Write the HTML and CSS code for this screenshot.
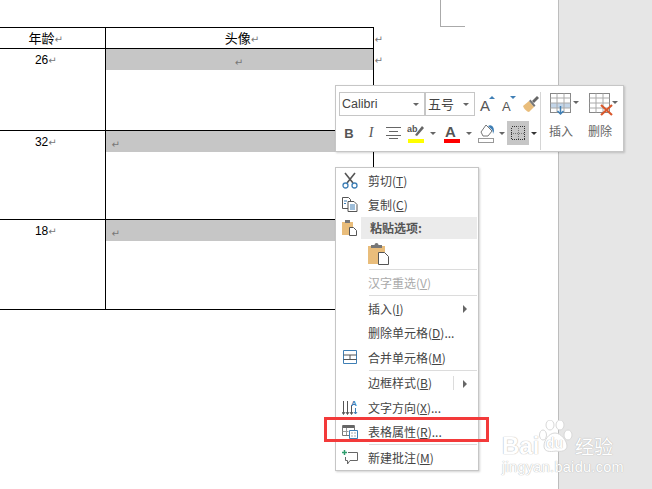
FILE: index.html
```html
<!DOCTYPE html>
<html lang="zh">
<head>
<meta charset="utf-8">
<title>表格属性</title>
<link rel="stylesheet" href="styles.css">
</head>
<body>
<div class="screen">
  <main class="page">
    <div class="corner"></div>
    <div class="table-row-wrap">
      <table class="doc-table">
        <colgroup><col class="c-age"><col class="c-photo"></colgroup>
        <tr class="r-head"><td class="age"><span class="cjk">年龄</span><span class="mark">↵</span></td><td class="photo-head"><span class="cjk">头像</span><span class="mark">↵</span></td></tr>
        <tr class="r1"><td class="age">26<span class="mark">↵</span></td><td class="photo"><div class="shade center"><span class="mark">↵</span></div></td></tr>
        <tr class="r2"><td class="age">32<span class="mark">↵</span></td><td class="photo"><div class="shade"><span class="mark">↵</span></div></td></tr>
        <tr class="r3"><td class="age">18<span class="mark">↵</span></td><td class="photo"><div class="shade"><span class="mark">↵</span></div></td></tr>
      </table>
      <div class="end-marks"><span class="mark">↵</span><span class="mark">↵</span></div>
    </div>
  </main>
  <aside class="desk"></aside>

  <div class="toolbar">
    <div class="tb-left">
      <div class="tb-row tb-row1">
        <div class="combo c-font"><span class="combo-text latin">Calibri</span><i class="caret"></i></div>
        <div class="combo c-size"><span class="combo-text">五号</span><i class="caret"></i></div>
        <svg class="ic-grow" width="20" height="20" viewBox="0 0 20 20"><text x="2" y="17" class="svg-a">A</text><path d="M11 5l3-3 3 3z" fill="#3f7fb5"/></svg>
        <svg class="ic-shrink" width="18" height="20" viewBox="0 0 18 20"><text x="2" y="17" class="svg-a2">A</text><path d="M10 2h6l-3 3z" fill="#3f7fb5"/></svg>
        <svg class="ic-brush" width="18" height="18" viewBox="0 0 18 18"><path d="M1 11l6-5 5 6-5 5c-2-.2-5-3-6-6z" fill="#e9bd7b"/><path d="M7 6l5 6 1.500-1.500-5-6z" fill="#777"/><path d="M10 6l5-5 2 2-5 5z" fill="#666"/></svg>
      </div>
      <div class="tb-row tb-row2">
        <span class="fmt fmt-b">B</span>
        <span class="fmt fmt-i">I</span>
        <svg class="ic-align" width="16" height="12" viewBox="0 0 16 12"><path d="M0 .5h15M3 4.500h9M0 8.500h15M3 11.500h9" stroke="#666" fill="none"/></svg>
        <svg class="ic-hl" width="18" height="21" viewBox="0 0 18 21"><text x="0" y="9" class="svg-ab">ab</text><path d="M8 12L15 3l2 2-7 8z" fill="#666"/><rect x="1" y="16" width="16" height="4" fill="#ff0"/></svg>
        <i class="caret c-hl"></i>
        <svg class="ic-color" width="16" height="21" viewBox="0 0 16 21"><text x="1" y="14" class="svg-color">A</text><rect y="16" width="16" height="4" fill="#f00"/></svg>
        <i class="caret c-color"></i>
        <svg class="ic-fill" width="18" height="21" viewBox="0 0 18 21"><path d="M3 9l5-7 6 6-4 5H5z" fill="#fff" stroke="#777"/><path d="M10 3c3-2 6 0 6 5l-1 3c0-3-1-5-3-6z" fill="#3f7fb5"/><rect x=".5" y="15.500" width="15" height="4" fill="#fff" stroke="#999"/></svg>
        <i class="caret c-fill"></i>
        <div class="border-btn"><svg class="crisp" width="14" height="14" viewBox="0 0 14 14"><path d="M.5.500h13v13H.5z" fill="none" stroke="#333" stroke-dasharray="1 1"/><path d="M7.500 0v14M0 7.500h14" fill="none" stroke="#777" stroke-dasharray="1 1"/></svg></div>
        <i class="caret c-border"></i>
      </div>
    </div>
    <div class="tb-div"></div>
    <div class="tb-right">
      <div class="tb-col tb-ins">
        <div class="tb-col-top">
          <svg width="25" height="23" viewBox="0 0 25 23"><rect x=".5" y=".5" width="20" height="19" fill="#fff" stroke="#888"/><rect x="1" y="10" width="19" height="5" fill="#c3d5e8"/><path d="M7 .5v19M14 .5v19M.5 5h20M.5 10h20M.5 15h20" stroke="#aaa" fill="none"/><path d="M10.500 13v7M7.500 18l3 3 3-3" stroke="#3f7fb5" stroke-width="1.500" fill="none"/></svg>
          <i class="caret"></i>
        </div>
        <span class="tb-label">插入</span>
      </div>
      <div class="tb-col tb-del">
        <div class="tb-col-top">
          <svg width="25" height="23" viewBox="0 0 25 23"><rect x=".5" y=".5" width="20" height="19" fill="#fff" stroke="#888"/><path d="M7 .5v19M14 .5v19M.5 5h20M.5 10h20M.5 15h20" stroke="#aaa" fill="none"/><path d="M12 12l11 10M23 12L12 22" stroke="#d9582c" stroke-width="2.200" fill="none"/></svg>
          <i class="caret"></i>
        </div>
        <span class="tb-label">删除</span>
      </div>
    </div>
  </div>

  <nav class="menu">
    <div class="item">
      <span class="ic"><svg width="16" height="17" viewBox="0 0 16 17"><path d="M3 1l8 10M13 1L5 11" stroke="#555" stroke-width="1.600" fill="none"/><circle cx="3.500" cy="13.500" r="2.500" fill="none" stroke="#3f7fb5" stroke-width="1.300"/><circle cx="12.500" cy="13.500" r="2.500" fill="none" stroke="#3f7fb5" stroke-width="1.300"/></svg></span>
      <span class="lb">剪切(<u>T</u>)</span>
    </div>
    <div class="item">
      <span class="ic"><svg width="16" height="15" viewBox="0 0 16 15"><path d="M.5.500h6l2 2v9H.5z" fill="#fff" stroke="#555"/><path d="M6 4.500h6l3 3v7H6z" fill="#fff" stroke="#555"/><path d="M2 4h3M2 6.500h2M8 8h5M8 10h5M8 12h5" stroke="#3f7fb5" fill="none"/></svg></span>
      <span class="lb">复制(<u>C</u>)</span>
    </div>
    <div class="item paste-head">
      <span class="ic"><svg width="16" height="16" viewBox="0 0 16 16"><rect y="2" width="11" height="13" fill="#e9bd7b"/><rect x="3" y="0" width="5" height="3" fill="#777"/><path d="M7.500 7.500h4l3 3v5h-7z" fill="#fff" stroke="#555"/></svg></span>
      <span class="lb bold">粘贴选项:</span>
    </div>
    <div class="paste-opt">
      <svg width="22" height="23" viewBox="0 0 22 23"><rect y="3" width="17" height="18" fill="#e9bd7b"/><rect x="3" y="2" width="11" height="3" fill="#777"/><circle cx="8.500" cy="2" r="2" fill="#777"/><path d="M10.500 9.500h6l4 4v8h-10z" fill="#fff" stroke="#555"/></svg>
    </div>
    <div class="sep"></div>
    <div class="item i-dis"><span class="ic"></span><span class="lb dis">汉字重选(<u>V</u>)</span></div>
    <div class="sep"></div>
    <div class="item"><span class="ic"></span><span class="lb">插入(<u>I</u>)</span><i class="arrow"></i></div>
    <div class="item"><span class="ic"></span><span class="lb">删除单元格(<u>D</u>)...</span></div>
    <div class="item">
      <span class="ic"><svg width="14" height="14" viewBox="0 0 14 14"><path d="M.5.500h13v13H.5z" fill="none" stroke="#3f7fb5"/><path d="M.5 5h13M.5 9.500h13M7 5v4.500" stroke="#555" fill="none"/></svg></span>
      <span class="lb">合并单元格(<u>M</u>)</span>
    </div>
    <div class="sep"></div>
    <div class="item"><span class="ic"></span><span class="lb">边框样式(<u>B</u>)</span><i class="vbar"></i><i class="arrow"></i></div>
    <div class="item">
      <span class="ic"><svg width="17" height="17" viewBox="0 0 17 17"><path d="M1.500 2v13M5.500 2v13M9.500 6v9M0 13l1.500 2.500L3 13M4 13l1.500 2.500L7 13M8 13l1.500 2.500L11 13" stroke="#555" fill="none"/><text x="9" y="7" class="svg-dir">A</text><path d="M13.500 9v6M12 13l1.500 2 1.500-2" stroke="#3f7fb5" fill="none"/></svg></span>
      <span class="lb">文字方向(<u>X</u>)...</span>
    </div>
    <div class="item">
      <span class="ic"><svg width="16" height="15" viewBox="0 0 16 15"><path d="M.5 1.500h12v10H.5z" fill="#fff" stroke="#777"/><rect x="1" y="1" width="11" height="3" fill="#666"/><path d="M4.500 4v7M.5 7.500h6" stroke="#999" fill="none"/><path d="M7.500 6.500h8v8h-8z" fill="#fff" stroke="#3f7fb5"/><path d="M9.500 9h1M12.500 9h1M9.500 12h1M12.500 12h1" stroke="#555" fill="none"/></svg></span>
      <span class="lb">表格属性(<u>R</u>)...</span>
    </div>
    <div class="sep"></div>
    <div class="item">
      <span class="ic"><svg width="16" height="15" viewBox="0 0 16 15"><path d="M6 2.500h9.500v8H8L5.500 14v-3.500H3.500V7" fill="#fff" stroke="#666"/><path d="M2.500 0v5M0 2.500h5" stroke="#2f9e6e" stroke-width="1.500" fill="none"/></svg></span>
      <span class="lb">新建批注(<u>M</u>)</span>
    </div>
  </nav>

  <div class="callout"></div>

  <div class="watermark">
    <svg class="paw" width="34" height="34" viewBox="0 0 34 34"><g fill="#fff" stroke="#d8d8d8" stroke-width="1"><ellipse cx="11" cy="5" rx="4" ry="5"/><ellipse cx="21" cy="5" rx="4" ry="5"/><ellipse cx="4" cy="15" rx="3.500" ry="5"/><ellipse cx="29" cy="15" rx="4" ry="5"/><path d="M16 13c6 0 12 8 12 13s-6 6-11 5c-6 1-12 1-12-5s5-13 11-13z"/></g></svg>
    <span class="wm-bai">Bai</span>
    <span class="wm-du">du</span>
    <span class="wm-jy">经验</span>
    <span class="wm-url">jingyan.baidu.com</span>
  </div>
</div>
</body>
</html>
```
FILE: styles.css
```css
html, body { margin: 0; padding: 0; }
body { width: 652px; height: 489px; overflow: hidden; background: #fff; font-family: "Noto Sans CJK SC", sans-serif; }
.screen { position: relative; width: 652px; height: 489px; overflow: hidden; display: flex; }
.page { width: 558px; height: 489px; background: #fff; border-right: 1px solid #bdbdbd; flex: none; position: relative; }
.desk { flex: 1; background: #e6e6e6; }

.corner { position: absolute; left: 440px; top: 0; width: 24px; height: 26px; border-left: 1px solid #aaa; border-bottom: 1px solid #aaa; }

.table-row-wrap { display: flex; padding-top: 27px; }
.doc-table { border-collapse: collapse; table-layout: fixed; width: 373px; height: 282px; font-size: 12px; color: #000; }
.c-age { width: 105px; }
.c-photo { width: 268px; }
.doc-table td { padding: 0; vertical-align: top; border-top: 1px solid #000; border-bottom: 1px solid #000; overflow: hidden; }
.photo, .photo-head { border-left: 1px solid #000; border-right: 1px solid #000; }
.age { text-align: center; padding-right: 13px !important; }
.photo-head { text-align: center; padding-left: 6px !important; }
.r-head td { height: 20px; line-height: 20px; font-size: 13px; }
.r-head { height: 21px; }
.r1 { height: 82px; }
.r2 { height: 89px; }
.r3 { height: 90px; }
.r1 .age, .r2 .age, .r3 .age { font-family: "Liberation Sans", sans-serif; font-size: 12px; line-height: 23px; }
.shade { height: 21px; line-height: 23px; background: #c6c6c6; padding-left: 6px; }
.shade.center { text-align: center; padding-left: 0; }
.mark { font-family: "DejaVu Sans", sans-serif; font-size: 10px; line-height: 10px; color: #777; font-weight: normal; }
.end-marks { display: flex; flex-direction: column; padding: 2px 0 0 1px; }
.end-marks .mark { height: 21px; line-height: 21px; }
.cjk { font-family: "Noto Sans CJK SC", sans-serif; line-height: 10px; }

.toolbar { position: absolute; left: 335px; top: 85px; width: 289px; height: 67px; box-sizing: border-box; background: #fff; border: 1px solid #c6c6c6; box-shadow: 1px 1px 2px rgba(0,0,0,.18); display: flex; padding: 6px 3px 0; }
.tb-left { width: 201px; flex: none; }
.tb-row { display: flex; align-items: center; position: relative; }
.tb-row1 { height: 24px; }
.tb-row2 { height: 24px; margin-top: 5px; }
.combo { height: 24px; box-sizing: border-box; border: 1px solid #c6c6c6; display: flex; align-items: center; padding-left: 2px; position: relative; flex: none; }
.c-font { width: 86px; }
.c-size { width: 50px; }
.combo-text { font-size: 13px; color: #444; line-height: 20px; }
.latin { font-family: "Liberation Sans", sans-serif; font-size: 12.500px; }
.caret { width: 0; height: 0; border-left: 3px solid transparent; border-right: 3px solid transparent; border-top: 3px solid #666; flex: none; display: block; }
.combo .caret { position: absolute; right: 5px; top: 10px; }
.ic-grow { margin-left: 3px; flex: none; }
.ic-shrink { margin-left: 2px; flex: none; }
.ic-brush { margin-left: 4px; flex: none; }
.svg-a { font: 15px "Liberation Sans", sans-serif; fill: #555; }
.svg-a2 { font: 13px "Liberation Sans", sans-serif; fill: #555; }
.svg-ab { font: bold 9px "Liberation Sans", sans-serif; fill: #555; }
.svg-color { font: bold 15px "Liberation Sans", sans-serif; fill: #555; }
.svg-dir { font: bold 8px "Liberation Sans", sans-serif; fill: #3f7fb5; }
.crisp { shape-rendering: crispEdges; }

.fmt { font-family: "Liberation Serif", serif; color: #555; font-size: 14px; width: 14px; text-align: center; flex: none; }
.fmt-b { font-weight: bold; font-family: "Liberation Sans", sans-serif; font-size: 13px; margin-left: 3px; }
.fmt-i { font-style: italic; margin-left: 8px; }
.ic-align { margin-left: 8px; flex: none; }
.ic-hl { margin-left: 5px; flex: none; }
.c-hl { margin-left: 5px; }
.ic-color { margin-left: 8px; flex: none; }
.c-color { margin-left: 6px; }
.ic-fill { margin-left: 6px; flex: none; }
.c-fill { margin-left: 3px; }
.border-btn { width: 22px; height: 24px; background: #c6c6c6; margin-left: 2px; display: flex; align-items: center; justify-content: center; flex: none; }
.c-border { margin-left: 2px; border-top-color: #333; }

.tb-div { width: 1px; height: 58px; background: #d5d5d5; flex: none; }
.tb-right { display: flex; padding-left: 8px; }
.tb-col { display: flex; flex-direction: column; width: 39px; flex: none; }
.tb-col-top { display: flex; height: 24px; margin-top: 1px; padding-left: 1px; }
.tb-col-top .caret { margin: 8px 0 0 -2px; }
.tb-label { font-size: 12px; color: #666; line-height: 18px; margin-top: 5px; }

.menu { position: absolute; left: 335px; top: 167px; width: 144px; height: 304px; box-sizing: border-box; background: #fff; border: 1px solid #c6c6c6; box-shadow: 1px 1px 2px rgba(0,0,0,.18); padding: 0 1px 0 0; }
.item { display: flex; align-items: center; height: 24.500px; font-size: 12px; color: #444; position: relative; }
.ic { width: 28px; flex: none; display: flex; justify-content: center; }
.lb { white-space: nowrap; margin-left: 4px; }
.lb u { text-underline-offset: 1px; }
.paste-head { height: 22px; }
.paste-head .lb { background: #ebebeb; flex: 1; height: 22px; line-height: 22px; margin-left: -3px; padding-left: 9px; }
.bold { font-weight: 700; color: #555; }
.paste-opt { height: 30px; padding-left: 32px; display: flex; align-items: center; }
.sep { height: 1px; background: #dcdcdc; margin-left: 33px; }
.dis { color: #aaa; }
.i-dis { height: 25px; }
.arrow { position: absolute; right: 10px; top: 9px; width: 0; height: 0; border-top: 4px solid transparent; border-bottom: 4px solid transparent; border-left: 4px solid #666; }
.vbar { position: absolute; right: 23px; top: 5px; width: 1px; height: 14px; background: #dcdcdc; }

.callout { position: absolute; left: 324px; top: 417px; width: 165px; height: 25px; box-sizing: border-box; border: 3px solid #f33a3a; }

.watermark { position: absolute; left: 500px; top: 420px; width: 130px; height: 62px; color: #fff; }
.paw { position: absolute; left: 39px; top: 0; }
.watermark span { position: absolute; white-space: nowrap; text-shadow: 0 0 1px #bbb, 0 0 1px #bbb; font-family: "Liberation Sans", sans-serif; }
.wm-bai { left: 2px; top: 13px; font-size: 24px; font-weight: 700; line-height: 26px; }
.wm-du { left: 46px; top: 14px; font-size: 14px; font-weight: 700; line-height: 18px; color: #fff; }
.watermark .wm-jy { left: 75px; top: 14px; font-family: "Noto Sans CJK SC", sans-serif; font-size: 19px; line-height: 24px; }
.wm-url { left: 2px; top: 39px; font-size: 14.500px; line-height: 16px; letter-spacing: .3px; }
```
